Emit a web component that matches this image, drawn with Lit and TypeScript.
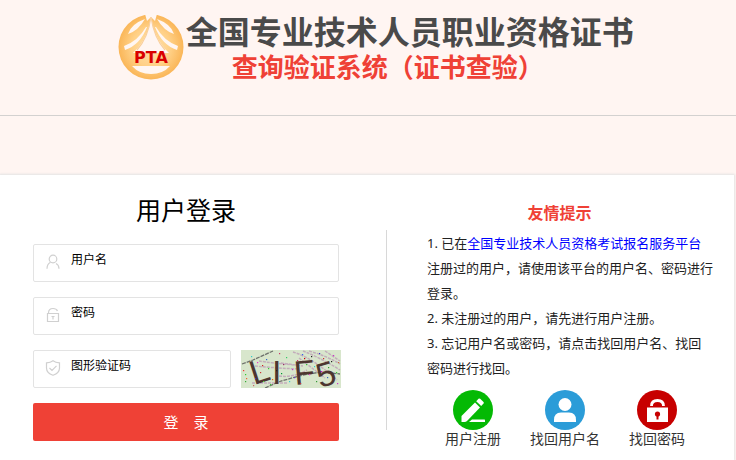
import { LitElement, html, css, svg } from "lit";
import { customElement } from "lit/decorators.js";

const logo = svg`
  <svg class="logo" viewBox="0 0 66 66" aria-hidden="true">
    <defs>
      <radialGradient id="gold" cx="0.5" cy="0.5" r="0.5">
        <stop offset="0" stop-color="#ffe3ae" />
        <stop offset="0.6" stop-color="#ffd086" />
        <stop offset="1" stop-color="#fab658" />
      </radialGradient>
    </defs>
    <circle cx="33" cy="33" r="32.5" fill="url(#gold)" />
    <g fill="#fff6f2">
      <path d="M27 0 L39 0 L37 7 L33 3 L29 7 Z" />
      <path d="M27 5 Q13 10 10 20 Q20 17 27 5 Z" />
      <path d="M39 5 Q53 10 56 20 Q46 17 39 5 Z" />
      <path d="M28 13 Q20 27 6 32 L7 36 Q22 31 29 13 Z" />
      <path d="M38 13 Q46 27 60 32 L59 36 Q44 31 37 13 Z" />
      <path d="M33 1 Q31 24 15 39 L51 39 Q35 24 33 1 Z" />
      <path d="M14 52 L52 52 Q45 60 33 60 Q21 60 14 52 Z" />
    </g>
    <path d="M33 3 Q30 24 19 36 M33 3 Q36 24 47 36" fill="none" stroke="#f9cf9c" stroke-width="1.2" />
    <text x="33" y="49" text-anchor="middle" class="logo-text">PTA</text>
  </svg>`;

const userIcon = svg`
  <svg class="field-icon" viewBox="0 0 16 16" aria-hidden="true">
    <circle cx="8" cy="5" r="3.8" />
    <path d="M5.5 8.2 Q2 10 2 14.8 M11 9.5 Q14 11 14 14.8" />
  </svg>`;
const lockIcon = svg`
  <svg class="field-icon" viewBox="0 0 16 16" aria-hidden="true">
    <path d="M2.5 6.5 H13.5 V14.5 H2.5 Z M3.5 6 Q3.5 1.5 8 1.5 Q11.5 1.5 12.5 4 M6.5 9.5 H9.5 M8 9.5 V12.5" />
  </svg>`;
const shieldIcon = svg`
  <svg class="field-icon" viewBox="0 0 16 16" aria-hidden="true">
    <path d="M8 0.8 Q10.5 2.8 14.5 2.8 V8 Q14.5 13 8 15.3 Q1.5 13 1.5 8 V2.8 Q5.5 2.8 8 0.8 Z M4.5 8 L7 10.5 L11.5 5.8" />
  </svg>`;

const specks: [number, number, string][] = [
  [2, 20, "#e33"], [4, 24, "#3c3"], [5, 28, "#e63"], [4, 31, "#3a3"], [14, 28, "#33c"], [16, 12, "#e3c"],
  [10, 6, "#3cc"], [19, 22, "#c33"], [21, 15, "#c22"], [27, 18, "#3c3"], [25, 9, "#36c"], [31, 29, "#e60"],
  [40, 23, "#093"], [42, 14, "#936"], [45, 7, "#3c6"], [51, 19, "#c3c"], [48, 31, "#3cc"], [56, 10, "#c36"],
  [61, 4, "#36e"], [63, 8, "#c00"], [65, 14, "#3c3"], [68, 24, "#e3c"], [73, 16, "#3cc"], [78, 3, "#33c"],
  [82, 8, "#c33"], [87, 17, "#393"], [92, 5, "#c3c"], [95, 22, "#3c3"], [97, 12, "#c63"], [86, 27, "#36c"],
  [38, 3, "#c36"], [29, 34, "#3c3"], [53, 27, "#63c"], [75, 31, "#393"], [70, 6, "#222"], [96, 33, "#c3c"],
  [12, 35, "#c66"], [35, 20, "#222"], [59, 33, "#c33"], [90, 11, "#222"], [22, 31, "#6c3"], [80, 21, "#c0c"],
];

const captcha = svg`
  <svg class="captcha-art" viewBox="0 0 100 38" aria-hidden="true">
    <rect width="100" height="38" fill="#d8e6cc" />
    <g fill="none" stroke="#c3adbb" stroke-width="1.5" stroke-dasharray="3 1">
      <path d="M18 11 Q30 13 54 15 M14 16 Q34 18 57 19 M11 33 H46 M38 26 Q52 28 66 20 M40 13 L62 16" />
      <path d="M52 2 Q72 8 96 30 M62 1 Q80 8 99 20 M68 1 Q86 6 99 14 M84 1 L99 11 M58 8 L84 28" />
    </g>
    <path d="M1 14 L12 10 L32 1 M24 38 L40 31 L62 25 L80 22 L99 24" fill="none" stroke="#6e716c" stroke-width="1.3" stroke-dasharray="4 1" />
    <g class="captcha-text">
      <text x="13" y="35" transform="rotate(-18 13 35)">L</text>
      <text x="31" y="34">I</text>
      <text x="54" y="35" transform="rotate(-5 54 35)">F</text>
      <text x="79" y="38" transform="rotate(-16 79 38)">5</text>
    </g>
    ${specks.map(([x, y, c]) => svg`<rect x=${x} y=${y} width="1.2" height="1.2" fill=${c} />`)}
  </svg>`;

const registerIcon = svg`
  <svg class="badge" viewBox="0 0 40 40" aria-hidden="true">
    <circle cx="20" cy="20" r="20" fill="#04b904" />
    <g fill="#fff">
      <path d="M8.5 26 L22 12.500 L27 17.500 L14 31 Q13 32 11.500 32 L8.500 32 Z" />
      <path d="M23.2 11.200 L25.500 8.800 Q26.300 8 27.200 8.800 L30.500 12 Q31.200 12.800 30.500 13.600 L28.200 16 Z" />
      <path d="M16 32 L19 29.500 H31.500 Q32 29.500 32 30.200 V32 Z" />
    </g>
  </svg>`;
const accountIcon = svg`
  <svg class="badge" viewBox="0 0 40 40" aria-hidden="true">
    <circle cx="20" cy="20" r="20" fill="#2b9cd8" />
    <circle cx="20" cy="14.500" r="6.500" fill="#fff" />
    <path d="M9 32 V30 Q9 22.500 16 22.500 H24 Q31 22.500 31 30 V32 Z" fill="#fff" />
  </svg>`;
const passwordIcon = svg`
  <svg class="badge" viewBox="0 0 40 40" aria-hidden="true">
    <circle cx="20" cy="20" r="20" fill="#c70000" />
    <path d="M14.500 16 Q14.500 10.500 20.500 10.500 Q26.500 10.500 26.500 16" fill="none" stroke="#fff" stroke-width="2.800" />
    <rect x="10" y="17.500" width="21" height="14.500" fill="#fff" />
    <circle cx="20.500" cy="24" r="2.600" fill="#c70000" />
    <rect x="19.500" y="25" width="2" height="4.500" fill="#c70000" />
  </svg>`;

@customElement("app-root")
export class AppRoot extends LitElement {
  static styles = css`
    :host {
      display: flex;
      flex-direction: column;
      min-height: 100vh;
      background: #fff5f2;
      color: #333;
      font: 13px/25px "Noto Sans", "Noto Sans CJK SC", sans-serif;
    }
    * { box-sizing: border-box; }
    h1, h2, p, ol, ul { margin: 0; padding: 0; list-style: none; }
    a { text-decoration: none; }
    header {
      display: flex;
      align-items: flex-start;
      gap: 2px;
      height: 116px;
      padding: 14px 16% 0;
      border-bottom: 1px solid #d3d1d0;
      white-space: nowrap;
    }
    .logo { flex: none; width: 66px; height: 66px; }
    .logo-text {
      font: bold 16px "DejaVu Sans", sans-serif;
      fill: #d90000;
    }
    h1 {
      color: #4a4a4a;
      font: bold 32px/32px "Noto Sans CJK SC", sans-serif;
    }
    h1 .system {
      display: block;
      padding-left: 46px;
      color: #ef4136;
      font-size: 26px;
      line-height: 40px;
    }
    main {
      flex: 1;
      display: grid;
      grid-template-columns: minmax(0, 386fr) 1px minmax(0, 347fr);
      margin: 59px 2px 0 0;
      background: #fff;
      box-shadow: 0 0 2px 1px #e4e4e4;
    }
    .login { padding: 16px 47px 0 33px; }
    .login h2 {
      color: #000;
      font-size: 25px;
      font-weight: 400;
      line-height: 38px;
      text-align: center;
    }
    form {
      display: grid;
      grid-template-columns: minmax(0, 1fr);
      gap: 15px;
      margin-top: 15px;
    }
    .field {
      display: flex;
      flex: 1;
      min-width: 0;
      height: 38px;
      padding: 0 12px;
      border: 1px solid #e3e3e3;
      border-radius: 2px;
      color: #000;
      font-size: 12px;
      line-height: 30px;
      white-space: nowrap;
    }
    .field-icon {
      flex: none;
      width: 16px;
      height: 16px;
      margin: 9px 10px 0 -1px;
      fill: none;
      stroke: #d0d0d0;
      stroke-width: 1.2;
    }
    .field input {
      flex: 1;
      min-width: 0;
      padding: 0 6px;
      border: 0;
      outline: 0;
      background: none;
      font: inherit;
    }
    .verify { display: flex; gap: 10px; margin-right: -2px; }
    .captcha {
      flex: none;
      width: 100px;
      height: 38px;
      padding: 0;
      border: 0;
      background: none;
      cursor: pointer;
    }
    .captcha-art { display: block; width: 100%; height: 100%; }
    .captcha-text {
      font: 34px "Liberation Sans", sans-serif;
      fill: #4d3630;
    }
    .submit {
      height: 38px;
      padding: 0 0 2px;
      border: 0;
      border-radius: 2px;
      background: #ef4136;
      color: #fff;
      font: 15px "Noto Sans CJK SC", sans-serif;
      cursor: pointer;
    }
    .divider { height: 200px; margin-top: 55px; background: #d8d8d8; }
    .tips { padding: 26px 20px 0 40px; }
    .tips h2 {
      padding-right: 22px;
      color: #ef4136;
      font-size: 16px;
      font-weight: 700;
      line-height: 25px;
      text-align: center;
    }
    .tips ol { margin: 5px 0 9px; color: #222; }
    .tips ol a { color: #00f; }
    .actions { display: flex; gap: 29px; padding-left: 18px; }
    .actions a {
      display: flex;
      flex-direction: column;
      align-items: center;
      color: #333;
      font-size: 14px;
      line-height: 18px;
      white-space: nowrap;
    }
    .badge { width: 40px; height: 40px; }
  `;

  render() {
    return html`
      <header>
        ${logo}
        <h1>全国专业技术人员职业资格证书<span class="system">查询验证系统（证书查验）</span></h1>
      </header>
      <main>
        <section class="login">
          <h2>用户登录</h2>
          <form @submit=${(e: Event) => e.preventDefault()}>
            <label class="field">${userIcon}<span>用户名</span><input type="text" name="username" autocomplete="username" /></label>
            <label class="field">${lockIcon}<span>密码</span><input type="password" name="password" autocomplete="current-password" /></label>
            <div class="verify">
              <label class="field">${shieldIcon}<span>图形验证码</span><input type="text" name="captcha" autocomplete="off" /></label>
              <button class="captcha" type="button" aria-label="图形验证码">${captcha}</button>
            </div>
            <button class="submit" type="submit">登　录</button>
          </form>
        </section>
        <div class="divider"></div>
        <section class="tips">
          <h2>友情提示</h2>
          <ol>
            <li>1. 已在<a href="#platform">全国专业技术人员资格考试报名服务平台</a>注册过的用户，请使用该平台的用户名、密码进行登录。</li>
            <li>2. 未注册过的用户，请先进行用户注册。</li>
            <li>3. 忘记用户名或密码，请点击找回用户名、找回密码进行找回。</li>
          </ol>
          <nav class="actions">
            <a href="#register">${registerIcon}用户注册</a>
            <a href="#username">${accountIcon}找回用户名</a>
            <a href="#password">${passwordIcon}找回密码</a>
          </nav>
        </section>
      </main>
    `;
  }
}
